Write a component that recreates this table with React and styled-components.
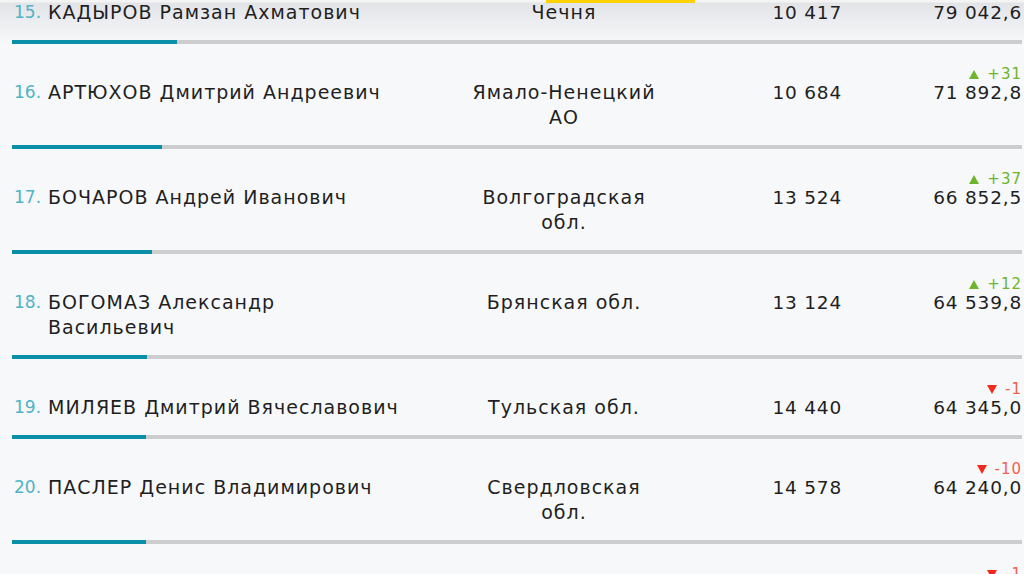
import React from 'react'
import styled, { createGlobalStyle } from 'styled-components'

const dark = '#1f1f1f'
const teal = '#0b8fa6'
const light_teal = '#4fb3c7'
const grey_bar = '#cdcdcd'
const page_bg = '#f7f8fa'
const green = '#6db52c'
const red_arrow = '#f2291c'
const red_text = '#f4604f'

const MAX_BAR = 0.002087

const rows = [
  { rank: 15, name: 'КАДЫРОВ Рамзан Ахматович', region: 'Чечня', count: '10 417', value: 79042.6 },
  { rank: 16, name: 'АРТЮХОВ Дмитрий Андреевич', region: 'Ямало-Ненецкий\nАО', count: '10 684', value: 71892.8, delta: 31 },
  { rank: 17, name: 'БОЧАРОВ Андрей Иванович', region: 'Волгоградская\nобл.', count: '13 524', value: 66852.5, delta: 37 },
  { rank: 18, name: 'БОГОМАЗ Александр\nВасильевич', region: 'Брянская обл.', count: '13 124', value: 64539.8, delta: 12 },
  { rank: 19, name: 'МИЛЯЕВ Дмитрий Вячеславович', region: 'Тульская обл.', count: '14 440', value: 64345.0, delta: -1 },
  { rank: 20, name: 'ПАСЛЕР Денис Владимирович', region: 'Свердловская\nобл.', count: '14 578', value: 64240.0, delta: -10 },
  { rank: 21, name: 'ЦЫДЕНОВ Алексей Сергеевич', region: 'Бурятия', count: '15 002', value: 63980.4, delta: -1 },
]

const formatValue = (v) => {
  const [int, frac] = v.toFixed(1).split('.')
  return int.replace(/\B(?=(\d{3})+(?!\d))/g, ' ') + ',' + frac
}

const Arrow = ({ up }) => (
  <svg width="10" height="9" viewBox="0 0 10 9">
    {up
      ? <polygon points="5,0 10,9 0,9" fill={green} />
      : <polygon points="0,0 10,0 5,9" fill={red_arrow} />}
  </svg>
)

const App = () => {
  return (
    <Page>
      <GlobalStyle />
      <Marker />
      <Rating>
        {rows.map((row) => (
          <Row key={row.rank}>
            <Cells>
              <Rank>{row.rank}.</Rank>
              <Name>{row.name}</Name>
              <Region>{row.region}</Region>
              <Count>{row.count}</Count>
              <Value>
                {row.delta !== undefined && (
                  <Delta $up={row.delta > 0}>
                    <Arrow up={row.delta > 0} />
                    {row.delta > 0 ? `+${row.delta}` : row.delta}
                  </Delta>
                )}
                {formatValue(row.value)}
              </Value>
            </Cells>
            <Bar>
              <BarFill style={{ width: `${row.value * MAX_BAR}px` }} />
            </Bar>
          </Row>
        ))}
      </Rating>
    </Page>
  )
}

export default App

const GlobalStyle = createGlobalStyle`
  html, body {
    margin: 0;
    padding: 0;
    background: ${page_bg};
    overflow: hidden;
  }
`

const Page = styled.div`
  width: 1024px;
  height: 574px;
  overflow: hidden;
  background: linear-gradient(to bottom, #f4f4f5 0, #f4f4f5 2px, #e3e4e7 3px, ${page_bg} 44px) no-repeat;
  background-color: ${page_bg};
  font-family: "DejaVu Sans", "Open Sans", sans-serif;
  color: ${dark};
`

const Marker = styled.div`
  position: fixed;
  top: 0;
  left: 546px;
  width: 149px;
  height: 3px;
  background: #ffd200;
  z-index: 2;
`

const Rating = styled.div`
  margin: -36px 2px 0 12px;
`

const Row = styled.div`
  padding-top: 36px;
`

const Cells = styled.div`
  display: grid;
  grid-template-columns: 36px 380px 272px 142px 180px;
  font-size: 18.5px;
  line-height: 25px;
  padding-bottom: 15px;
`

const Rank = styled.div`
  color: ${light_teal};
  font-size: 17px;
  padding-left: 2px;
`

const Name = styled.div`
  white-space: pre-line;
  font-size: 19px;
  letter-spacing: 1px;
`

const Region = styled.div`
  white-space: pre-line;
  text-align: center;
  font-size: 19px;
  letter-spacing: 1px;
`

const Count = styled.div`
  text-align: right;
  letter-spacing: 0.8px;
`

const Value = styled.div`
  position: relative;
  text-align: right;
  letter-spacing: 0.8px;
`

const Delta = styled.div`
  position: absolute;
  right: 0;
  bottom: calc(100% - 3px);
  display: flex;
  align-items: center;
  gap: 8px;
  font-size: 15px;
  line-height: 18px;
  letter-spacing: 1px;
  color: ${(p) => (p.$up ? green : red_text)};
`

const Bar = styled.div`
  height: 4px;
  background: ${grey_bar};
`

const BarFill = styled.div`
  height: 100%;
  background: ${teal};
`
